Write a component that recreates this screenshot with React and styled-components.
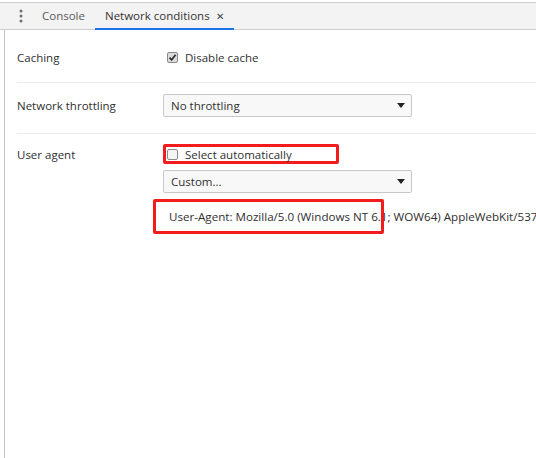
import React from 'react';
import styled, { createGlobalStyle } from 'styled-components';

const Global = createGlobalStyle`
  html, body { margin: 0; padding: 0; background: #fff; }
  body {
    font-family: 'Open Sans', 'Noto Sans', sans-serif;
    font-size: 11.5px;
    color: #303030;
  }
`;

const Page = styled.div`
  width: 536px;
  height: 458px;
  overflow: hidden;
  display: flex;
  flex-direction: column;
`;

const TabBar = styled.div`
  margin-top: 2px;
  height: 26px;
  background: #f3f3f3;
  border-top: 1px solid #cdcdcd;
  border-bottom: 1px solid #cdcdcd;
  display: flex;
  align-items: stretch;
`;

const Dots = styled.div`
  width: 32px;
  display: flex;
  align-items: center;
  justify-content: center;
  padding-left: 10px;
  box-sizing: border-box;
`;

const Tab = styled.div`
  display: flex;
  align-items: center;
  padding: 0 10px;
  color: ${p => (p.$active ? '#333' : '#5a5a5a')};
  border-bottom: 2px solid ${p => (p.$active ? '#1a73e8' : 'transparent')};
  margin-bottom: -1px;
  white-space: nowrap;
`;

const Close = styled.span`
  margin-left: 6px;
  font-size: 10px;
  color: #444;
`;

const Panel = styled.div`
  flex: 1;
  margin-left: 4px;
  border-left: 1px solid #c6c6c6;
  padding-left: 12px;
`;

const Section = styled.div`
  display: flex;
  border-bottom: ${p => (p.$last ? 'none' : '1px solid #ebebeb')};
  padding: ${p => p.$pad};
`;

const Label = styled.div`
  width: 146px;
  flex-shrink: 0;
  height: ${p => p.$h || 20}px;
  display: flex;
  align-items: center;
`;

const Controls = styled.div`
  flex: 1;
  display: flex;
  flex-direction: column;
  gap: 6px;
  min-width: 0;
`;

const CheckRow = styled.label`
  display: flex;
  align-items: center;
  height: 20px;
  gap: 7px;
  padding-left: 4px;
`;

const Annotated = styled.div`
  width: 169px;
  height: 14px;
  border: 3px solid #f21c1c;
  border-radius: 2px;
  display: flex;
  align-items: center;
  gap: 7px;
  padding-left: 1px;
`;

const Box = styled.span`
  width: 11px;
  height: 11px;
  box-sizing: border-box;
  border: 1px solid #8a8a8a;
  border-radius: 2px;
  background: ${p => (p.$checked ? '#dcdcdc' : '#f4f4f4')};
  display: flex;
  align-items: center;
  justify-content: center;
`;

const Select = styled.div`
  width: 249px;
  height: 23px;
  box-sizing: border-box;
  border: 1px solid #c8c8c8;
  border-radius: 2px;
  background: #f8f8f8;
  display: flex;
  align-items: center;
  justify-content: space-between;
  padding: 0 6px 0 7px;
`;

const Arrow = styled.span`
  width: 0;
  height: 0;
  border-left: 4px solid transparent;
  border-right: 4px solid transparent;
  border-top: 5px solid #222;
`;

const UARow = styled.div`
  position: relative;
  height: 34px;
  display: flex;
  align-items: center;
  padding-left: 6px;
  white-space: nowrap;
  font-size: 11.62px;
`;

const Highlight = styled.div`
  position: absolute;
  left: -10px;
  top: 0;
  width: 225px;
  height: 29px;
  border: 3px solid #f21c1c;
  border-radius: 2px;
`;

function Checkbox({ checked }) {
  return (
    <Box $checked={checked}>
      {checked && (
        <svg width="9" height="9" viewBox="0 0 9 9">
          <path d="M1.5 4.6 L3.6 6.8 L7.6 1.8" fill="none" stroke="#333" strokeWidth="1.8" />
        </svg>
      )}
    </Box>
  );
}

export default function App() {
  return (
    <>
      <Global />
      <Page>
        <TabBar>
          <Dots>
            <svg width="4" height="14" viewBox="0 0 4 14">
              <circle cx="2" cy="2" r="1.5" fill="#6e6e6e" />
              <circle cx="2" cy="7" r="1.5" fill="#6e6e6e" />
              <circle cx="2" cy="12" r="1.5" fill="#6e6e6e" />
            </svg>
          </Dots>
          <Tab>Console</Tab>
          <Tab $active>
            Network conditions<Close>✕</Close>
          </Tab>
        </TabBar>
        <Panel>
          <Section $pad="17px 0 15px">
            <Label>Caching</Label>
            <Controls>
              <CheckRow>
                <Checkbox checked />
                Disable cache
              </CheckRow>
            </Controls>
          </Section>
          <Section $pad="11px 0 16px">
            <Label $h={23}>Network throttling</Label>
            <Controls>
              <Select>
                No throttling
                <Arrow />
              </Select>
            </Controls>
          </Section>
          <Section $pad="10px 0 0" $last>
            <Label $h={21}>User agent</Label>
            <Controls>
              <Annotated>
                <Checkbox />
                Select automatically
              </Annotated>
              <Select>
                Custom...
                <Arrow />
              </Select>
              <UARow>
                <Highlight />
                User-Agent: Mozilla/5.0 (Windows NT 6.1; WOW64) AppleWebKit/537.36
              </UARow>
            </Controls>
          </Section>
        </Panel>
      </Page>
    </>
  );
}
